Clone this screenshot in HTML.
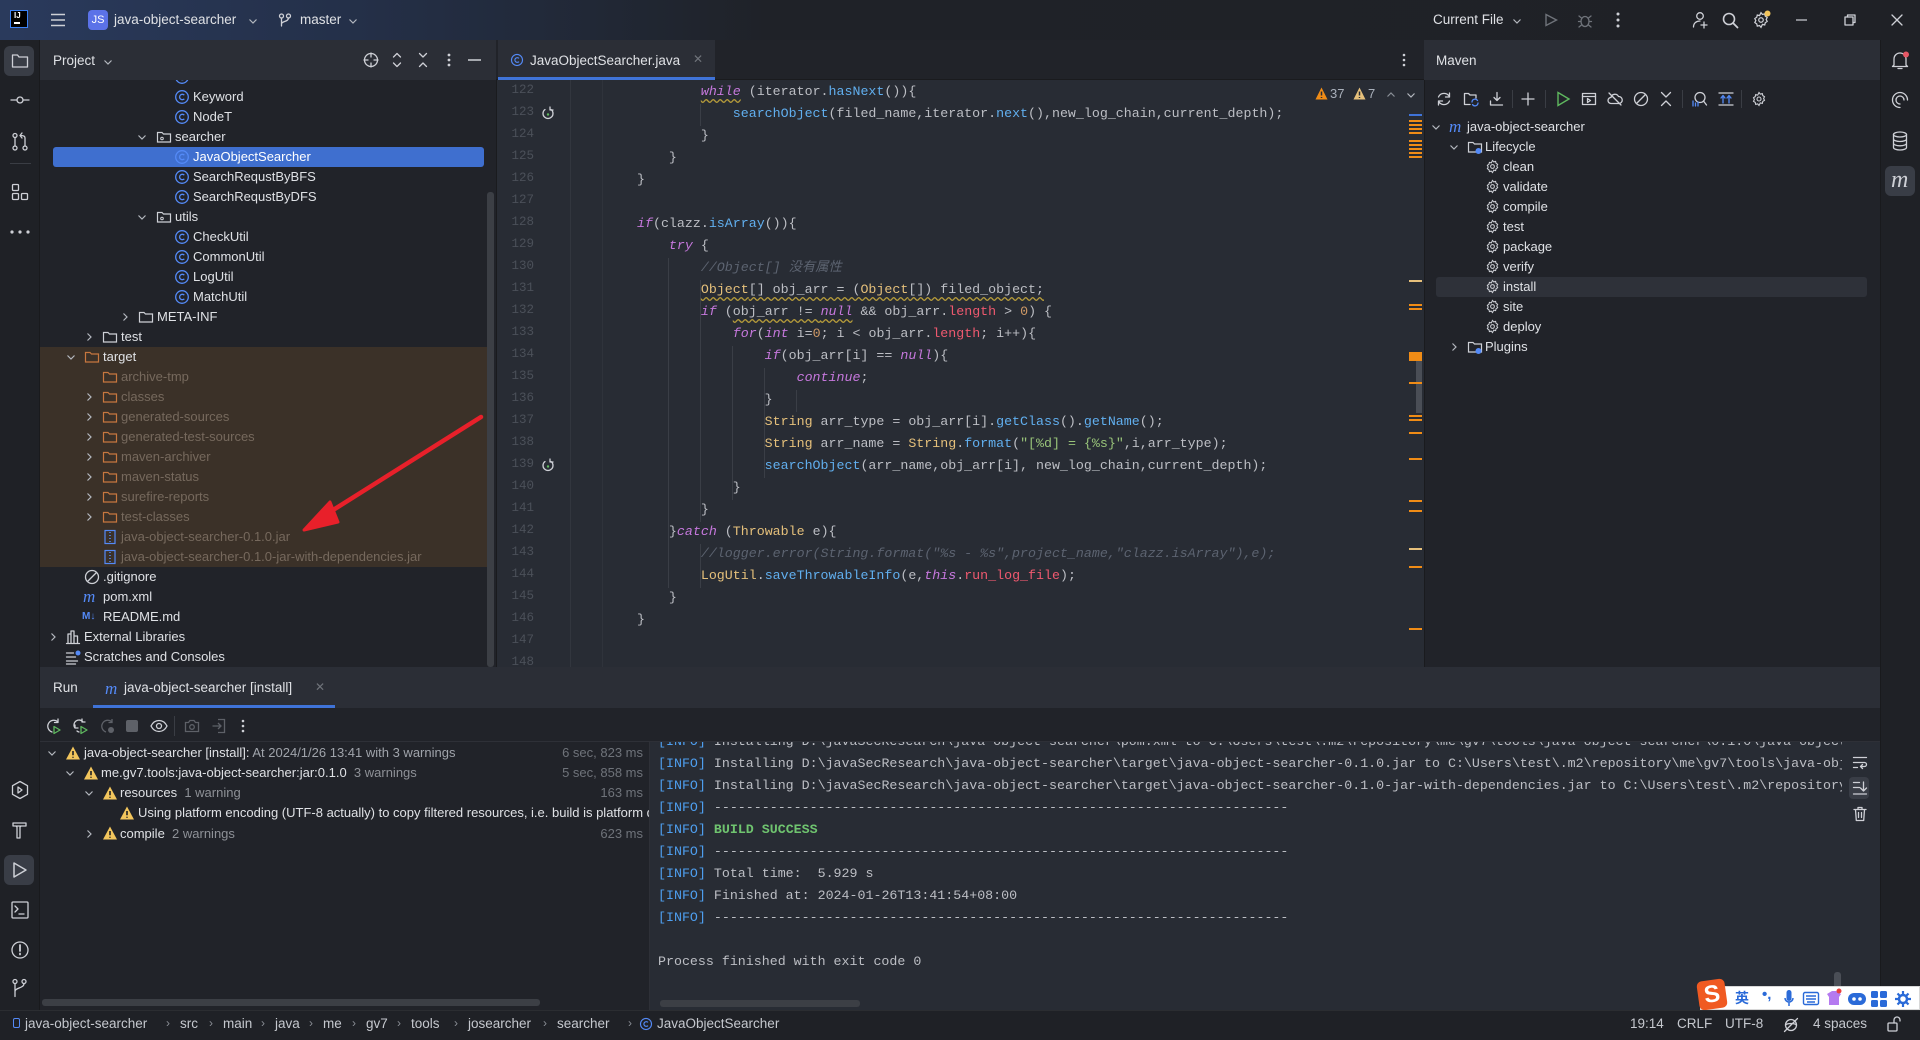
<!DOCTYPE html>
<html><head><meta charset="utf-8">
<style>
*{margin:0;padding:0;box-sizing:border-box}
body{width:1920px;height:1040px;overflow:hidden;background:#1f2126;font-family:"Liberation Sans","Noto Sans CJK SC",sans-serif;font-size:13px;color:#dfe1e5;position:relative}
.a{position:absolute}
.mono{font-family:"Liberation Mono","Noto Sans CJK SC",monospace;font-size:13.3px;white-space:pre}
svg{position:absolute;overflow:visible}
.ic{stroke:#ced0d6;fill:none;stroke-width:1.3;stroke-linecap:round;stroke-linejoin:round}
.row{position:absolute;height:20px;line-height:20px;white-space:nowrap}
.k{color:#c678dd;font-style:italic}.f{color:#61afef}.t{color:#e5c07b}.p{color:#ef596f}.n{color:#d19a66}.s{color:#98c379}.c{color:#5c6370;font-style:italic}
.w{text-decoration:underline wavy #b59b3a;text-underline-offset:3px}
.ln{position:absolute;left:500px;width:34px;text-align:right;color:#4b5059;font-family:"Liberation Mono",monospace;font-size:12.5px}
.dim{color:#76695d}
.info{color:#4e9ff0}
</style></head><body>
<svg width="0" height="0" style="position:absolute">
<symbol id="cls" viewBox="0 0 16 16"><circle cx="8" cy="8" r="6.3" fill="none" stroke="#548af7" stroke-width="1.3"/><path d="M10.3 6.2A2.7 2.7 0 1 0 10.3 9.8" fill="none" stroke="#548af7" stroke-width="1.3"/></symbol>
<symbol id="fold" viewBox="0 0 16 16"><path d="M1.5 3.5h4.5l1.5 1.5h7v8h-13z" fill="none" stroke="#ced0d6" stroke-width="1.2"/></symbol>
<symbol id="foldo" viewBox="0 0 16 16"><path d="M1.5 3.5h4.5l1.5 1.5h7v8h-13z" fill="none" stroke="#c7773f" stroke-width="1.2"/></symbol>
<symbol id="pkg" viewBox="0 0 16 16"><path d="M1.5 3.5h4.5l1.5 1.5h7v8h-13z" fill="none" stroke="#ced0d6" stroke-width="1.2"/><circle cx="6" cy="9.5" r="1.3" fill="none" stroke="#ced0d6"/></symbol>
<symbol id="jar" viewBox="0 0 16 16"><rect x="3" y="1.5" width="10" height="13" fill="none" stroke="#548af7" stroke-width="1.2"/><path d="M8 3v1M8 6v1M8 9v1M8 12v1" stroke="#548af7" stroke-width="1.5"/></symbol>
<symbol id="dn" viewBox="0 0 10 10"><path d="M1.5 3.5L5 7l3.5-3.5" fill="none" stroke="#b4b8bf" stroke-width="1.2"/></symbol>
<symbol id="rt" viewBox="0 0 10 10"><path d="M3.5 1.5L7 5l-3.5 3.5" fill="none" stroke="#b4b8bf" stroke-width="1.2"/></symbol>
<symbol id="gear" viewBox="0 0 16 16"><circle cx="8" cy="8" r="2" fill="none" stroke="#ced0d6" stroke-width="1.1"/><path d="M8 1.5l1.3 1.6 2-.5.5 2 1.7 1.1-.9 1.8.9 1.8-1.7 1.1-.5 2-2-.5L8 14.5l-1.3-1.6-2 .5-.5-2-1.7-1.1.9-1.8-.9-1.8 1.7-1.1.5-2 2 .5z" fill="none" stroke="#ced0d6" stroke-width="1.1"/></symbol>
<symbol id="warn" viewBox="0 0 16 16"><path d="M8 1.5L15 14.5H1z" fill="#f2c55c"/><path d="M8 6v4.2M8 11.8v1" stroke="#1e1f22" stroke-width="1.6"/></symbol>
<symbol id="mvn" viewBox="0 0 16 16"><text x="0" y="13" font-family="Liberation Serif" font-style="italic" font-size="17" fill="#548af7">m</text></symbol>
<symbol id="lfc" viewBox="0 0 16 16"><path d="M1.5 3.5h4.5l1.5 1.5h7v8h-13z" fill="none" stroke="#ced0d6" stroke-width="1.2"/><circle cx="11.5" cy="12" r="3" fill="#548af7"/></symbol>
</svg>

<!-- TITLE BAR -->
<div class="a" style="left:0;top:0;width:1920px;height:40px;background:linear-gradient(90deg,#2a3a5c 0%,#243049 18%,#1f2228 40%,#1f2126 100%)"></div>
<div class="a" style="left:10px;top:10px;width:18px;height:18px;background:#000;border:1.5px solid #3b82f6;color:#fff;font-size:8px;font-weight:bold;line-height:9px;padding-left:3px">IJ<div style="width:6px;height:1.5px;background:#fff;margin-top:2px"></div></div>
<svg style="left:50px;top:13px" width="16" height="14"><path d="M1 1.5h14M1 7h14M1 12.5h14" stroke="#ced0d6" stroke-width="1.5"/></svg>
<div class="a" style="left:88px;top:10px;width:20px;height:20px;background:#5b72e8;border-radius:4px;color:#fff;font-size:11px;line-height:20px;text-align:center">JS</div>
<div class="a" style="left:114px;top:12px;color:#dfe1e5;font-size:13.5px">java-object-searcher</div>
<svg style="left:248px;top:16px" width="10" height="10"><use href="#dn" width="10" height="10"/></svg>
<svg style="left:278px;top:13px" width="14" height="14" class="ic"><circle cx="3.5" cy="3" r="2"/><circle cx="10.5" cy="3" r="2"/><path d="M3.5 5v8M10.5 5c0 4-7 3-7 6"/></svg>
<div class="a" style="left:300px;top:12px;color:#dfe1e5;font-size:13.5px">master</div>
<svg style="left:348px;top:16px" width="10" height="10"><use href="#dn" width="10" height="10"/></svg>
<div class="a" style="left:1433px;top:12px;font-size:13.5px">Current File</div>
<svg style="left:1512px;top:16px" width="10" height="10"><use href="#dn" width="10" height="10"/></svg>
<svg style="left:1544px;top:13px" width="14" height="14"><path d="M2 1.5L12.5 7 2 12.5z" fill="none" stroke="#6f737a" stroke-width="1.4"/></svg>
<svg style="left:1577px;top:12px" width="16" height="16" class="ic"><ellipse cx="8" cy="9.5" rx="4" ry="5" stroke="#6f737a"/><path d="M1.5 9.5h2.5M12 9.5h2.5M2 4l2.5 2M14 4l-2.5 2M2 15l2.5-2M14 15l-2.5-2" stroke="#6f737a"/></svg>
<svg style="left:1616px;top:12px" width="4" height="16"><circle cx="2" cy="2" r="1.5" fill="#ced0d6"/><circle cx="2" cy="8" r="1.5" fill="#ced0d6"/><circle cx="2" cy="14" r="1.5" fill="#ced0d6"/></svg>
<svg style="left:1692px;top:11px" width="18" height="18" class="ic"><circle cx="8" cy="5" r="3.3"/><path d="M1.5 16c0-4 3-6 6.5-6M12 11v6M9 14h6"/></svg>
<svg style="left:1722px;top:12px" width="17" height="17" class="ic"><circle cx="7" cy="7" r="5.5" stroke-width="1.6"/><path d="M11 11l4.5 4.5" stroke-width="1.8"/></svg>
<svg style="left:1752px;top:11px" width="18" height="18"><use href="#gear" width="18" height="18"/><circle cx="15.5" cy="2.5" r="3" fill="#f2c55c"/></svg>
<svg style="left:1796px;top:19px" width="12" height="2"><path d="M0 1h11" stroke="#ced0d6" stroke-width="1.2"/></svg>
<svg style="left:1844px;top:14px" width="12" height="12" class="ic"><rect x="1" y="3" width="8" height="8"/><path d="M3.5 3V1h7.5v7.5h-2"/></svg>
<svg style="left:1891px;top:14px" width="12" height="12" class="ic"><path d="M1 1l10 10M11 1L1 11"/></svg>

<!-- LEFT STRIP -->
<div class="a" style="left:0;top:40px;width:40px;height:970px;background:#1f2126;border-right:1px solid #191a1d"></div>
<div class="a" style="left:4px;top:46px;width:30px;height:30px;background:#393d46;border-radius:6px"></div>
<svg style="left:11px;top:53px" width="18" height="16" class="ic"><path d="M1.5 2h5l1.5 2h8.5v10h-15z"/></svg>
<svg style="left:10px;top:95px" width="20" height="10" class="ic"><circle cx="10" cy="5" r="3"/><path d="M1 5h6M13 5h6"/></svg>
<svg style="left:11px;top:132px" width="18" height="20" class="ic"><circle cx="4" cy="3.5" r="2"/><circle cx="4" cy="16" r="2"/><circle cx="14" cy="16" r="2"/><path d="M4 5.5v8.5M14 14V6c0-2-2-2.5-4-2.5M11 1l-2 2.5 2 2.5"/></svg>
<div class="a" style="left:10px;top:163px;width:21px;height:1px;background:#3a3d44"></div>
<svg style="left:11px;top:183px" width="18" height="18" class="ic"><rect x="1.5" y="1.5" width="6" height="6" rx="1"/><rect x="1.5" y="10.5" width="6" height="6" rx="1"/><rect x="10.5" y="10.5" width="6" height="6" rx="1"/></svg>
<svg style="left:10px;top:230px" width="20" height="4"><circle cx="2" cy="2" r="1.6" fill="#ced0d6"/><circle cx="10" cy="2" r="1.6" fill="#ced0d6"/><circle cx="18" cy="2" r="1.6" fill="#ced0d6"/></svg>
<svg style="left:10px;top:780px" width="20" height="20" class="ic"><path d="M10 1.5l7.5 4.2v8.6L10 18.5l-7.5-4.2V5.7z"/><path d="M8 7l4 3-4 3z"/></svg>
<svg style="left:10px;top:820px" width="20" height="20" class="ic"><path d="M3 3h13v3H3zM6 6l1 1v11h3V7l1-1"/></svg>
<div class="a" style="left:4px;top:855px;width:30px;height:30px;background:#393d46;border-radius:6px"></div>
<svg style="left:12px;top:861px" width="16" height="18" class="ic"><path d="M2 2l12 7-12 7z" stroke-width="1.5"/></svg>
<svg style="left:10px;top:900px" width="20" height="20" class="ic"><rect x="2" y="2" width="16" height="16" rx="1"/><path d="M5 6l3 3-3 3M9 14h5"/></svg>
<svg style="left:10px;top:940px" width="20" height="20" class="ic"><circle cx="10" cy="10" r="8"/><path d="M10 5v6M10 13.5v1" stroke-width="1.8"/></svg>
<svg style="left:11px;top:978px" width="18" height="20" class="ic"><circle cx="4" cy="3.5" r="2"/><circle cx="13" cy="3.5" r="2"/><path d="M4 5.5v13M13 5.5c0 5-9 4-9 8"/></svg>

<!-- PROJECT PANEL -->
<div class="a" style="left:40px;top:40px;width:456px;height:627px;background:#212329"></div>
<div class="a" style="left:40px;top:40px;width:456px;height:40px;background:#2b2e36"></div>
<div class="a" style="left:53px;top:53px;font-size:13.5px">Project</div>
<svg style="left:103px;top:57px" width="10" height="10"><use href="#dn" width="10" height="10"/></svg>
<svg style="left:363px;top:52px" width="16" height="16" class="ic"><circle cx="8" cy="8" r="6.5"/><path d="M8 1v4M8 11v4M1 8h4M11 8h4"/></svg>
<svg style="left:392px;top:52px" width="10" height="16" class="ic"><path d="M1.5 5L5 1.5 8.5 5M1.5 11L5 14.5 8.5 11"/></svg>
<svg style="left:418px;top:52px" width="10" height="16" class="ic"><path d="M1.5 1.5L5 5 8.5 1.5M1.5 14.5L5 11 8.5 14.5"/></svg>
<svg style="left:447px;top:53px" width="4" height="14"><circle cx="2" cy="2" r="1.4" fill="#ced0d6"/><circle cx="2" cy="7" r="1.4" fill="#ced0d6"/><circle cx="2" cy="12" r="1.4" fill="#ced0d6"/></svg>
<svg style="left:468px;top:59px" width="14" height="2"><path d="M0 1h13" stroke="#ced0d6" stroke-width="1.5"/></svg>

<div class="a" style="left:40px;top:80px;width:447px;height:587px;overflow:hidden">
 <div class="a" style="left:0;top:267px;width:447px;height:220px;background:#3b3128"></div>
 <div class="a" style="left:13px;top:67px;width:431px;height:20px;background:#3f6fcf;border-radius:3px"></div>
</div>
<div class="a" style="left:487px;top:192px;width:7px;height:475px;background:#3c3f45;border-radius:3px"></div>

<div class="a" style="left:0;top:80px;width:487px;height:587px;overflow:hidden">
<div style="position:absolute;left:0;top:-80px;width:487px;height:700px">
<svg style="left:174px;top:69px" width="16" height="16"><use href="#cls" width="16" height="16"/></svg>
<svg style="left:174px;top:89px" width="16" height="16"><use href="#cls" width="16" height="16"/></svg><div class="row" style="left:193px;top:87px">Keyword</div>
<svg style="left:174px;top:109px" width="16" height="16"><use href="#cls" width="16" height="16"/></svg><div class="row" style="left:193px;top:107px">NodeT</div>
<svg style="left:137px;top:132px" width="10" height="10"><use href="#dn" width="10" height="10"/></svg><svg style="left:156px;top:129px" width="16" height="16"><use href="#pkg" width="16" height="16"/></svg><div class="row" style="left:175px;top:127px">searcher</div>
<svg style="left:174px;top:149px" width="16" height="16"><use href="#cls" width="16" height="16"/></svg><div class="row" style="left:193px;top:147px;color:#fff">JavaObjectSearcher</div>
<svg style="left:174px;top:169px" width="16" height="16"><use href="#cls" width="16" height="16"/></svg><div class="row" style="left:193px;top:167px">SearchRequstByBFS</div>
<svg style="left:174px;top:189px" width="16" height="16"><use href="#cls" width="16" height="16"/></svg><div class="row" style="left:193px;top:187px">SearchRequstByDFS</div>
<svg style="left:137px;top:212px" width="10" height="10"><use href="#dn" width="10" height="10"/></svg><svg style="left:156px;top:209px" width="16" height="16"><use href="#pkg" width="16" height="16"/></svg><div class="row" style="left:175px;top:207px">utils</div>
<svg style="left:174px;top:229px" width="16" height="16"><use href="#cls" width="16" height="16"/></svg><div class="row" style="left:193px;top:227px">CheckUtil</div>
<svg style="left:174px;top:249px" width="16" height="16"><use href="#cls" width="16" height="16"/></svg><div class="row" style="left:193px;top:247px">CommonUtil</div>
<svg style="left:174px;top:269px" width="16" height="16"><use href="#cls" width="16" height="16"/></svg><div class="row" style="left:193px;top:267px">LogUtil</div>
<svg style="left:174px;top:289px" width="16" height="16"><use href="#cls" width="16" height="16"/></svg><div class="row" style="left:193px;top:287px">MatchUtil</div>
<svg style="left:120px;top:312px" width="10" height="10"><use href="#rt" width="10" height="10"/></svg><svg style="left:138px;top:309px" width="16" height="16"><use href="#fold" width="16" height="16"/></svg><div class="row" style="left:157px;top:307px">META-INF</div>
<svg style="left:84px;top:332px" width="10" height="10"><use href="#rt" width="10" height="10"/></svg><svg style="left:102px;top:329px" width="16" height="16"><use href="#fold" width="16" height="16"/></svg><div class="row" style="left:121px;top:327px">test</div>
<svg style="left:66px;top:352px" width="10" height="10"><use href="#dn" width="10" height="10"/></svg><svg style="left:84px;top:349px" width="16" height="16"><use href="#foldo" width="16" height="16"/></svg><div class="row" style="left:103px;top:347px">target</div>
<svg style="left:102px;top:369px" width="16" height="16"><use href="#foldo" width="16" height="16"/></svg><div class="row dim" style="left:121px;top:367px">archive-tmp</div>
<svg style="left:84px;top:392px" width="10" height="10"><use href="#rt" width="10" height="10"/></svg><svg style="left:102px;top:389px" width="16" height="16"><use href="#foldo" width="16" height="16"/></svg><div class="row dim" style="left:121px;top:387px">classes</div>
<svg style="left:84px;top:412px" width="10" height="10"><use href="#rt" width="10" height="10"/></svg><svg style="left:102px;top:409px" width="16" height="16"><use href="#foldo" width="16" height="16"/></svg><div class="row dim" style="left:121px;top:407px">generated-sources</div>
<svg style="left:84px;top:432px" width="10" height="10"><use href="#rt" width="10" height="10"/></svg><svg style="left:102px;top:429px" width="16" height="16"><use href="#foldo" width="16" height="16"/></svg><div class="row dim" style="left:121px;top:427px">generated-test-sources</div>
<svg style="left:84px;top:452px" width="10" height="10"><use href="#rt" width="10" height="10"/></svg><svg style="left:102px;top:449px" width="16" height="16"><use href="#foldo" width="16" height="16"/></svg><div class="row dim" style="left:121px;top:447px">maven-archiver</div>
<svg style="left:84px;top:472px" width="10" height="10"><use href="#rt" width="10" height="10"/></svg><svg style="left:102px;top:469px" width="16" height="16"><use href="#foldo" width="16" height="16"/></svg><div class="row dim" style="left:121px;top:467px">maven-status</div>
<svg style="left:84px;top:492px" width="10" height="10"><use href="#rt" width="10" height="10"/></svg><svg style="left:102px;top:489px" width="16" height="16"><use href="#foldo" width="16" height="16"/></svg><div class="row dim" style="left:121px;top:487px">surefire-reports</div>
<svg style="left:84px;top:512px" width="10" height="10"><use href="#rt" width="10" height="10"/></svg><svg style="left:102px;top:509px" width="16" height="16"><use href="#foldo" width="16" height="16"/></svg><div class="row dim" style="left:121px;top:507px">test-classes</div>
<svg style="left:102px;top:529px" width="16" height="16"><use href="#jar" width="16" height="16"/></svg><div class="row dim" style="left:121px;top:527px">java-object-searcher-0.1.0.jar</div>
<svg style="left:102px;top:549px" width="16" height="16"><use href="#jar" width="16" height="16"/></svg><div class="row dim" style="left:121px;top:547px">java-object-searcher-0.1.0-jar-with-dependencies.jar</div>
<svg style="left:84px;top:569px" width="16" height="16" class="ic"><circle cx="8" cy="8" r="6.5"/><path d="M3.5 12.5l9-9"/></svg><div class="row" style="left:103px;top:567px">.gitignore</div>
<svg style="left:82px;top:589px" width="18" height="16"><use href="#mvn" width="18" height="16"/></svg><div class="row" style="left:103px;top:587px">pom.xml</div>
<div class="row" style="left:82px;top:607px;color:#548af7;font-weight:bold;font-size:10px">M↓</div><div class="row" style="left:103px;top:607px">README.md</div>
<svg style="left:48px;top:632px" width="10" height="10"><use href="#rt" width="10" height="10"/></svg><svg style="left:65px;top:629px" width="16" height="16" class="ic"><path d="M1.5 14.5h13M3 14.5V5h3v9.5M6 14.5V2h3v12.5M9 14.5V7h3.5v7.5"/></svg><div class="row" style="left:84px;top:627px">External Libraries</div>
<svg style="left:65px;top:649px" width="16" height="16" class="ic"><path d="M1.5 4h7M1.5 8h9M1.5 12h11M1.5 15h9"/><circle cx="13" cy="4" r="2.5" fill="#548af7" stroke="none"/></svg><div class="row" style="left:84px;top:647px">Scratches and Consoles</div>
</div></div>
<!-- red arrow -->
<svg style="left:0;top:0" width="1920" height="1040"><path d="M481 417L322 517" stroke="#e8202a" stroke-width="4.5" stroke-linecap="round"/><path d="M304 530L330 502 338 522z" fill="#e8202a" stroke="#e8202a" stroke-width="3" stroke-linejoin="round"/></svg>

<!-- EDITOR -->
<div class="a" style="left:496px;top:40px;width:928px;height:627px;background:#282c34;border-left:1px solid #1a1b1e"></div>
<div class="a" style="left:496px;top:40px;width:928px;height:40px;background:#212329;border-bottom:1px solid #1a1b1e"></div>
<div class="a" style="left:498px;top:40px;width:217px;height:40px;background:#2b2e36;border-bottom:3px solid #3f73d8"></div>
<svg style="left:510px;top:53px" width="14" height="14"><use href="#cls" width="14" height="14"/></svg>
<div class="a" style="left:530px;top:53px;font-size:13.5px">JavaObjectSearcher.java</div>
<div class="a" style="left:693px;top:52px;color:#6f737a;font-size:12px">✕</div>
<svg style="left:1402px;top:53px" width="4" height="14"><circle cx="2" cy="2" r="1.3" fill="#ced0d6"/><circle cx="2" cy="7" r="1.3" fill="#ced0d6"/><circle cx="2" cy="12" r="1.3" fill="#ced0d6"/></svg>
<div class="a" style="left:570px;top:80px;width:1px;height:587px;background:#32363e"></div>
<div class="a" style="left:602px;top:80px;width:1px;height:587px;background:#2f333b"></div>
<div class="a" style="left:668px;top:258px;width:1px;height:330px;background:#3a3e46"></div>
<div class="a" style="left:700px;top:280px;width:1px;height:242px;background:#3a3e46"></div>
<div class="a" style="left:700px;top:544px;width:1px;height:44px;background:#3a3e46"></div>
<div class="a" style="left:732px;top:346px;width:1px;height:154px;background:#3a3e46"></div>
<div class="a" style="left:764px;top:368px;width:1px;height:110px;background:#3a3e46"></div>
<div class="a" style="left:796px;top:390px;width:1px;height:22px;background:#3a3e46"></div>
<div class="a" style="left:700px;top:104px;width:1px;height:22px;background:#3a3e46"></div>

<div class="a" style="left:496px;top:80px;width:910px;height:587px;overflow:hidden">
<div style="position:absolute;left:-496px;top:-80px;width:1420px;height:700px">
<div class="ln" style="top:83px">122</div><div class="ln" style="top:105px">123</div><div class="ln" style="top:127px">124</div><div class="ln" style="top:149px">125</div><div class="ln" style="top:171px">126</div><div class="ln" style="top:193px">127</div><div class="ln" style="top:215px">128</div><div class="ln" style="top:237px">129</div><div class="ln" style="top:259px">130</div><div class="ln" style="top:281px">131</div><div class="ln" style="top:303px">132</div><div class="ln" style="top:325px">133</div><div class="ln" style="top:347px">134</div><div class="ln" style="top:369px">135</div><div class="ln" style="top:391px">136</div><div class="ln" style="top:413px">137</div><div class="ln" style="top:435px">138</div><div class="ln" style="top:457px">139</div><div class="ln" style="top:479px">140</div><div class="ln" style="top:501px">141</div><div class="ln" style="top:523px">142</div><div class="ln" style="top:545px">143</div><div class="ln" style="top:567px">144</div><div class="ln" style="top:589px">145</div><div class="ln" style="top:611px">146</div><div class="ln" style="top:633px">147</div><div class="ln" style="top:655px">148</div>
<svg style="left:541px;top:106px" width="14" height="14" class="ic"><path d="M4 3.5A5 5 0 1 0 10 3.5M9 1v3h3"/><circle cx="7" cy="8.5" r="1.2" fill="#5fb85f" stroke="none"/></svg>
<svg style="left:541px;top:458px" width="14" height="14" class="ic"><path d="M4 3.5A5 5 0 1 0 10 3.5M9 1v3h3"/><circle cx="7" cy="8.5" r="1.2" fill="#5fb85f" stroke="none"/></svg>
<div class="a mono" style="left:637px;top:81px;line-height:22px;color:#bcbec4">        <span class="k w">while</span> (iterator.<span class="f">hasNext</span>()){
            <span class="f">searchObject</span>(filed_name,iterator.<span class="f">next</span>(),new_log_chain,current_depth);
        }
    }
}

<span class="k">if</span>(clazz.<span class="f">isArray</span>()){
    <span class="k">try</span> {
        <span class="c">//Object[] 没有属性</span>
        <span class="w"><span class="t">Object</span>[] obj_arr = (<span class="t">Object</span>[]) filed_object;</span>
        <span class="k">if</span> (<span class="w">obj_arr != <span class="k">null</span></span> &amp;&amp; obj_arr.<span class="p">length</span> &gt; <span class="n">0</span>) {
            <span class="k">for</span>(<span class="k">int</span> i=<span class="n">0</span>; i &lt; obj_arr.<span class="p">length</span>; i++){
                <span class="k">if</span>(obj_arr[i] == <span class="k">null</span>){
                    <span class="k">continue</span>;
                }
                <span class="t">String</span> arr_type = obj_arr[i].<span class="f">getClass</span>().<span class="f">getName</span>();
                <span class="t">String</span> arr_name = <span class="t">String</span>.<span class="f">format</span>(<span class="s">"[%d] = {%s}"</span>,i,arr_type);
                <span class="f">searchObject</span>(arr_name,obj_arr[i], new_log_chain,current_depth);
            }
        }
    }<span class="k">catch</span> (<span class="t">Throwable</span> e){
        <span class="c">//logger.error(String.format("%s - %s",project_name,"clazz.isArray"),e);</span>
        <span class="t">LogUtil</span>.<span class="f">saveThrowableInfo</span>(e,<span class="k">this</span>.<span class="p">run_log_file</span>);
    }
}</div>
</div></div>
<!-- inspection widget -->
<svg style="left:1315px;top:87px" width="13" height="13"><path d="M6.5 0.5L12.5 12.5H0.5z" fill="#f08c16"/><path d="M6.5 4.5v4M6.5 10v1" stroke="#282c34" stroke-width="1.5"/></svg>
<div class="a" style="left:1330px;top:86px;color:#a9b0bb;font-size:13px">37</div>
<svg style="left:1353px;top:87px" width="13" height="13"><path d="M6.5 0.5L12.5 12.5H0.5z" fill="#e6c07b"/><path d="M6.5 4.5v4M6.5 10v1" stroke="#282c34" stroke-width="1.5"/></svg>
<div class="a" style="left:1368px;top:86px;color:#a9b0bb;font-size:13px">7</div>
<svg style="left:1386px;top:90px" width="10" height="10"><path d="M1.5 6.5L5 3l3.5 3.5" fill="none" stroke="#8a8f97" stroke-width="1.2"/></svg>
<svg style="left:1406px;top:90px" width="10" height="10"><use href="#dn" width="10" height="10"/></svg>
<!-- error stripe -->
<div class="a" style="left:1409px;top:114px;width:13px;height:2px;background:#3f73d8"></div>
<div class="a" style="left:1409px;top:120px;width:13px;height:14px;background:repeating-linear-gradient(#f08c16 0 2px,transparent 2px 4px)"></div>
<div class="a" style="left:1409px;top:140px;width:13px;height:18px;background:repeating-linear-gradient(#f08c16 0 2px,transparent 2px 4px)"></div>
<div class="a" style="left:1409px;top:280px;width:13px;height:2px;background:#e6c07b"></div>
<div class="a" style="left:1409px;top:304px;width:13px;height:6px;background:repeating-linear-gradient(#f08c16 0 2px,transparent 2px 4px)"></div>
<div class="a" style="left:1409px;top:352px;width:13px;height:9px;background:#f08c16"></div>
<div class="a" style="left:1416px;top:361px;width:6px;height:52px;background:#4a4e56"></div>
<div class="a" style="left:1409px;top:382px;width:13px;height:2px;background:#f08c16"></div>
<div class="a" style="left:1409px;top:415px;width:13px;height:6px;background:repeating-linear-gradient(#f08c16 0 2px,transparent 2px 4px)"></div>
<div class="a" style="left:1409px;top:432px;width:13px;height:2px;background:#f08c16"></div>
<div class="a" style="left:1409px;top:458px;width:13px;height:2px;background:#f08c16"></div>
<div class="a" style="left:1409px;top:500px;width:13px;height:2px;background:#f08c16"></div>
<div class="a" style="left:1409px;top:510px;width:13px;height:2px;background:#f08c16"></div>
<div class="a" style="left:1409px;top:548px;width:13px;height:2px;background:#e6c07b"></div>
<div class="a" style="left:1409px;top:566px;width:13px;height:2px;background:#f08c16"></div>
<div class="a" style="left:1409px;top:628px;width:13px;height:2px;background:#f08c16"></div>

<!-- MAVEN -->
<div class="a" style="left:1424px;top:40px;width:456px;height:627px;background:#212329;border-left:1px solid #1a1b1e"></div>
<div class="a" style="left:1424px;top:40px;width:456px;height:40px;background:#2b2e36"></div>
<div class="a" style="left:1436px;top:53px;font-size:13.5px">Maven</div>
<svg style="left:1436px;top:91px" width="16" height="16" class="ic"><path d="M13.5 6A6 6 0 0 0 2.5 6M2.5 10a6 6 0 0 0 11 0M13.5 2v4h-4M2.5 14v-4h4"/></svg>
<svg style="left:1463px;top:91px" width="16" height="16" class="ic"><path d="M1.5 2.5h4l1.5 1.5h6v3M7 13.5H1.5v-11"/><path d="M9 11a3 3 0 0 1 5.5-1.5M15 12a3 3 0 0 1-5.5 1.5" stroke="#548af7"/></svg>
<svg style="left:1489px;top:91px" width="16" height="16" class="ic"><path d="M8 1.5v8M5 6.5l3 3 3-3M1.5 10v4h12"/></svg>
<div class="a" style="left:1512px;top:90px;width:1px;height:18px;background:#3a3d44"></div>
<svg style="left:1521px;top:92px" width="14" height="14" class="ic"><path d="M7 1v12M1 7h12"/></svg>
<div class="a" style="left:1545px;top:90px;width:1px;height:18px;background:#3a3d44"></div>
<svg style="left:1555px;top:91px" width="16" height="16"><path d="M3 1.5L14 8 3 14.5z" fill="none" stroke="#5fb85f" stroke-width="1.4"/></svg>
<svg style="left:1581px;top:91px" width="16" height="16" class="ic"><rect x="1.5" y="2.5" width="13" height="11"/><path d="M1.5 5.5h13M6.5 7.5l3 2-3 2z"/></svg>
<svg style="left:1607px;top:91px" width="16" height="16" class="ic"><path d="M4 12.5a3 3 0 0 1 0-6 4 4 0 0 1 7.5-1 3 3 0 0 1 .5 7H4M2 2l12 12"/></svg>
<svg style="left:1633px;top:91px" width="16" height="16" class="ic"><circle cx="8" cy="8" r="6.5"/><path d="M3.5 12.5l9-9"/></svg>
<svg style="left:1660px;top:91px" width="12" height="16" class="ic"><path d="M1.5 1.5L6 6l4.5-4.5M1.5 14.5L6 10l4.5 4.5"/></svg>
<div class="a" style="left:1682px;top:90px;width:1px;height:18px;background:#3a3d44"></div>
<svg style="left:1691px;top:91px" width="16" height="16" class="ic"><circle cx="9" cy="6.5" r="5"/><path d="M12.5 10l3 4"/><path d="M2 10v5M4.5 12v3M7 11v4" stroke="#548af7"/></svg>
<svg style="left:1718px;top:91px" width="16" height="16" class="ic"><path d="M5 12V5M3 7l2-2.5L7 7M11 12V5M9 7l2-2.5L13 7" stroke="#548af7"/><path d="M1 2h14M1 14h14"/></svg>
<div class="a" style="left:1741px;top:90px;width:1px;height:18px;background:#3a3d44"></div>
<svg style="left:1751px;top:91px" width="16" height="16"><use href="#gear" width="16" height="16"/></svg>
<div class="a" style="left:1436px;top:277px;width:431px;height:20px;background:#2e3139;border-radius:3px"></div>
<svg style="left:1431px;top:122px" width="10" height="10"><use href="#dn" width="10" height="10"/></svg>
<svg style="left:1448px;top:119px" width="18" height="16"><use href="#mvn" width="18" height="16"/></svg>
<div class="row" style="left:1467px;top:117px">java-object-searcher</div>
<svg style="left:1449px;top:142px" width="10" height="10"><use href="#dn" width="10" height="10"/></svg>
<svg style="left:1467px;top:139px" width="16" height="16"><use href="#lfc" width="16" height="16"/></svg>
<div class="row" style="left:1485px;top:137px">Lifecycle</div>
<svg style="left:1485px;top:159px" width="15" height="15"><use href="#gear" width="15" height="15"/></svg><div class="row" style="left:1503px;top:157px">clean</div>
<svg style="left:1485px;top:179px" width="15" height="15"><use href="#gear" width="15" height="15"/></svg><div class="row" style="left:1503px;top:177px">validate</div>
<svg style="left:1485px;top:199px" width="15" height="15"><use href="#gear" width="15" height="15"/></svg><div class="row" style="left:1503px;top:197px">compile</div>
<svg style="left:1485px;top:219px" width="15" height="15"><use href="#gear" width="15" height="15"/></svg><div class="row" style="left:1503px;top:217px">test</div>
<svg style="left:1485px;top:239px" width="15" height="15"><use href="#gear" width="15" height="15"/></svg><div class="row" style="left:1503px;top:237px">package</div>
<svg style="left:1485px;top:259px" width="15" height="15"><use href="#gear" width="15" height="15"/></svg><div class="row" style="left:1503px;top:257px">verify</div>
<svg style="left:1485px;top:279px" width="15" height="15"><use href="#gear" width="15" height="15"/></svg><div class="row" style="left:1503px;top:277px">install</div>
<svg style="left:1485px;top:299px" width="15" height="15"><use href="#gear" width="15" height="15"/></svg><div class="row" style="left:1503px;top:297px">site</div>
<svg style="left:1485px;top:319px" width="15" height="15"><use href="#gear" width="15" height="15"/></svg><div class="row" style="left:1503px;top:317px">deploy</div>
<svg style="left:1449px;top:342px" width="10" height="10"><use href="#rt" width="10" height="10"/></svg>
<svg style="left:1467px;top:339px" width="16" height="16"><use href="#lfc" width="16" height="16"/></svg>
<div class="row" style="left:1485px;top:337px">Plugins</div>

<!-- RIGHT STRIP -->
<div class="a" style="left:1880px;top:40px;width:40px;height:970px;background:#1f2126;border-left:1px solid #191a1d"></div>
<svg style="left:1891px;top:51px" width="18" height="20" class="ic"><path d="M3 14V8a6 6 0 0 1 12 0v6l1.5 1.5h-15zM7 17.5h4"/><circle cx="15" cy="3.5" r="3" fill="#e55765" stroke="none"/></svg>
<svg style="left:1891px;top:91px" width="18" height="18" class="ic"><path d="M9 16.5A7.5 7.5 0 1 1 16.5 9M9 13a4 4 0 1 1 4-4"/></svg>
<svg style="left:1892px;top:131px" width="16" height="20" class="ic"><ellipse cx="8" cy="3.5" rx="6.5" ry="2.5"/><path d="M1.5 3.5v13c0 1.4 2.9 2.5 6.5 2.5s6.5-1.1 6.5-2.5v-13M1.5 8c0 1.4 2.9 2.5 6.5 2.5s6.5-1.1 6.5-2.5M1.5 12.3c0 1.4 2.9 2.5 6.5 2.5s6.5-1.1 6.5-2.5"/></svg>
<div class="a" style="left:1885px;top:166px;width:30px;height:30px;background:#393d46;border-radius:6px"></div>
<div class="a" style="left:1891px;top:166px;font-family:'Liberation Serif';font-style:italic;font-size:24px;line-height:28px;color:#ced0d6">m</div>

<!-- BOTTOM PANEL -->
<div class="a" style="left:40px;top:667px;width:1840px;height:343px;background:#212329;border-top:1px solid #1a1b1e"></div>
<div class="a" style="left:40px;top:667px;width:1840px;height:41px;background:#2b2e36"></div>
<div class="a" style="left:53px;top:680px;font-size:13.5px">Run</div>
<div class="a" style="left:93px;top:705px;width:242px;height:3px;background:#3f73d8"></div>
<svg style="left:104px;top:681px" width="18" height="16"><use href="#mvn" width="18" height="16"/></svg>
<div class="a" style="left:124px;top:680px;font-size:13.5px">java-object-searcher [install]</div>
<div class="a" style="left:315px;top:680px;color:#6f737a;font-size:12px">✕</div>
<svg style="left:46px;top:718px" width="16" height="16" class="ic"><path d="M12 4A6 6 0 1 0 6 14M12 1v3.5H8.5"/><path d="M8 8.5l6 3.5-6 3.5z" stroke="#5fb85f"/></svg>
<svg style="left:73px;top:718px" width="16" height="16" class="ic"><path d="M10 4A5 5 0 0 0 2 10M4 13A5 5 0 0 0 6 14M9 1v3h3M2 7v3h3"/><path d="M8 8.5l6 3.5-6 3.5z" stroke="#5fb85f"/></svg>
<svg style="left:100px;top:718px" width="16" height="16"><path d="M12 4A6 6 0 1 0 6 14M12 1v3.5H8.5" fill="none" stroke="#5e6168" stroke-width="1.3"/><circle cx="11" cy="12" r="3" fill="#5e6168"/></svg>
<div class="a" style="left:126px;top:720px;width:12px;height:12px;background:#5e6168;border-radius:2px"></div>
<svg style="left:150px;top:718px" width="18" height="16" class="ic"><path d="M1 8c2-4 5-5.5 8-5.5S15 4 17 8c-2 4-5 5.5-8 5.5S3 12 1 8z"/><circle cx="9" cy="8" r="2.5"/></svg>
<div class="a" style="left:174px;top:716px;width:1px;height:20px;background:#3a3d44"></div>
<svg style="left:184px;top:718px" width="16" height="16"><path d="M1.5 4.5h3l1.5-2h4l1.5 2h3v9h-13z" fill="none" stroke="#5e6168" stroke-width="1.3"/><circle cx="8" cy="9" r="2.3" fill="none" stroke="#5e6168" stroke-width="1.3"/></svg>
<svg style="left:211px;top:718px" width="16" height="16"><path d="M7 1.5h6.5v13H7M1.5 8h8M7 5l3 3-3 3" fill="none" stroke="#5e6168" stroke-width="1.3"/></svg>
<svg style="left:241px;top:719px" width="4" height="14"><circle cx="2" cy="2" r="1.3" fill="#ced0d6"/><circle cx="2" cy="7" r="1.3" fill="#ced0d6"/><circle cx="2" cy="12" r="1.3" fill="#ced0d6"/></svg>
<div class="a" style="left:40px;top:741px;width:1840px;height:1px;background:#2e3037"></div>
<!-- run tree -->
<div class="a" style="left:40px;top:742px;width:609px;height:262px;overflow:hidden">
<div style="position:absolute;left:-40px;top:-742px;width:700px;height:1040px">
<svg style="left:47px;top:748px" width="10" height="10"><use href="#dn" width="10" height="10"/></svg>
<svg style="left:65px;top:745px" width="16" height="16"><use href="#warn" width="16" height="16"/></svg>
<div class="row" style="left:84px;top:743px"><span style="color:#dfe1e5">java-object-searcher [install]:</span> <span style="color:#a0a4ab">At 2024/1/26 13:41 with 3 warnings</span></div>
<div class="row" style="left:560px;top:743px;width:83px;text-align:right;color:#6f737a">6 sec, 823 ms</div>
<svg style="left:65px;top:768px" width="10" height="10"><use href="#dn" width="10" height="10"/></svg>
<svg style="left:83px;top:765px" width="16" height="16"><use href="#warn" width="16" height="16"/></svg>
<div class="row" style="left:101px;top:763px">me.gv7.tools:java-object-searcher:jar:0.1.0 <span style="color:#8e9197">&nbsp;3 warnings</span></div>
<div class="row" style="left:560px;top:763px;width:83px;text-align:right;color:#6f737a">5 sec, 858 ms</div>
<svg style="left:84px;top:788px" width="10" height="10"><use href="#dn" width="10" height="10"/></svg>
<svg style="left:102px;top:785px" width="16" height="16"><use href="#warn" width="16" height="16"/></svg>
<div class="row" style="left:120px;top:783px">resources <span style="color:#8e9197">&nbsp;1 warning</span></div>
<div class="row" style="left:560px;top:783px;width:83px;text-align:right;color:#6f737a">163 ms</div>
<svg style="left:119px;top:805px" width="16" height="16"><use href="#warn" width="16" height="16"/></svg>
<div class="row" style="left:138px;top:803px">Using platform encoding (UTF-8 actually) to copy filtered resources, i.e. build is platform dependent!</div>
<svg style="left:84px;top:829px" width="10" height="10"><use href="#rt" width="10" height="10"/></svg>
<svg style="left:102px;top:825px" width="16" height="16"><use href="#warn" width="16" height="16"/></svg>
<div class="row" style="left:120px;top:824px">compile <span style="color:#8e9197">&nbsp;2 warnings</span></div>
<div class="row" style="left:560px;top:824px;width:83px;text-align:right;color:#6f737a">623 ms</div>
</div></div>
<div class="a" style="left:42px;top:999px;width:498px;height:7px;background:#3c3f45;border-radius:3px"></div>
<div class="a" style="left:649px;top:742px;width:1px;height:268px;background:#2e3037"></div>
<!-- console -->
<div class="a" style="left:650px;top:742px;width:1230px;height:268px;background:#282c34"></div>
<div class="a" style="left:658px;top:742px;width:1184px;height:258px;overflow:hidden">
<div class="a mono" style="left:0;top:-11px;line-height:22px;color:#bcbec4"><span class="info">[INFO]</span> Installing D:\javaSecResearch\java-object-searcher\pom.xml to C:\Users\test\.m2\repository\me\gv7\tools\java-object-searcher\0.1.0\java-object-searcher-0.1.0.pom
<span class="info">[INFO]</span> Installing D:\javaSecResearch\java-object-searcher\target\java-object-searcher-0.1.0.jar to C:\Users\test\.m2\repository\me\gv7\tools\java-object-searcher
<span class="info">[INFO]</span> Installing D:\javaSecResearch\java-object-searcher\target\java-object-searcher-0.1.0-jar-with-dependencies.jar to C:\Users\test\.m2\repository\me
<span class="info">[INFO]</span> ------------------------------------------------------------------------
<span class="info">[INFO]</span> <b style="color:#6fc46f">BUILD SUCCESS</b>
<span class="info">[INFO]</span> ------------------------------------------------------------------------
<span class="info">[INFO]</span> Total time:  5.929 s
<span class="info">[INFO]</span> Finished at: 2024-01-26T13:41:54+08:00
<span class="info">[INFO]</span> ------------------------------------------------------------------------

Process finished with exit code 0</div>
</div>
<div class="a" style="left:660px;top:1000px;width:200px;height:7px;background:#3c3f45;border-radius:3px"></div>
<div class="a" style="left:1834px;top:972px;width:7px;height:28px;background:#4a4e56;border-radius:3px"></div>
<div class="a" style="left:1846px;top:742px;width:34px;height:268px;background:#282c34"></div>
<svg style="left:1852px;top:755px" width="16" height="16" class="ic"><path d="M1.5 2.5h13M1.5 7.5h11a2 2 0 0 1 0 4H9M10.5 9.5l-2 2 2 2M1.5 12.5h4"/></svg>
<div class="a" style="left:1849px;top:777px;width:20px;height:22px;background:#393d46;border-radius:4px"></div>
<svg style="left:1852px;top:780px" width="16" height="16" class="ic"><path d="M1.5 2.5h6M1.5 7.5h6M1.5 14h13M11.5 2v9M8.5 8l3 3 3-3"/></svg>
<svg style="left:1853px;top:806px" width="14" height="16" class="ic"><path d="M1 3.5h12M5 3.5V1.5h4v2M2.5 3.5l.8 11h7.4l.8-11M5.5 6.5v5M8.5 6.5v5"/></svg>

<!-- IME toolbar -->
<div class="a" style="left:1700px;top:986px;width:220px;height:24px;background:#fff;border:1px solid #d8d8d8"></div>
<div class="a" style="left:1698px;top:980px;width:28px;height:29px;background:#f05a22;border-radius:5px;transform:rotate(-8deg);color:#fff;font-weight:bold;font-size:24px;line-height:29px;text-align:center;font-family:'Liberation Sans'">S</div>
<div class="a" style="left:1735px;top:988px;color:#2a6ad8;font-size:14px;font-weight:bold;font-family:'Noto Sans CJK SC',sans-serif">英</div>
<div class="a" style="left:1762px;top:986px;color:#2a6ad8;font-size:15px;font-weight:bold">•,</div>
<svg style="left:1784px;top:990px" width="10" height="17"><rect x="2.5" y="0" width="5" height="11" rx="2.5" fill="#2a6ad8"/><path d="M1 8a4 4 0 0 0 8 0M5 12v4" stroke="#2a6ad8" stroke-width="1.5" fill="none"/></svg>
<svg style="left:1803px;top:992px" width="16" height="13"><rect x="0.5" y="0.5" width="15" height="12" rx="1.5" fill="none" stroke="#2a6ad8" stroke-width="1.4"/><path d="M3 4h10M3 7h10M4 10h8" stroke="#2a6ad8" stroke-width="1.4"/></svg>
<svg style="left:1826px;top:988px" width="16" height="18"><path d="M1 6l5-3h4l5 3-2 3v8H3V9z" fill="#b57af0"/><circle cx="13" cy="3" r="2.5" fill="#e84040"/></svg>
<svg style="left:1848px;top:992px" width="18" height="14"><rect x="0" y="1" width="18" height="12" rx="6" fill="#2a6ad8"/><circle cx="6" cy="7" r="1.8" fill="#fff"/><circle cx="12" cy="7" r="1.8" fill="#fff"/></svg>
<svg style="left:1871px;top:991px" width="16" height="16"><rect x="0" y="0" width="7" height="7" rx="1.5" fill="#2a6ad8"/><rect x="9" y="0" width="7" height="7" rx="1.5" fill="#2a6ad8"/><rect x="0" y="9" width="7" height="7" rx="1.5" fill="#2a6ad8"/><rect x="9" y="9" width="7" height="7" rx="1.5" fill="#2a6ad8"/></svg>
<svg style="left:1894px;top:990px" width="18" height="18"><circle cx="9" cy="9" r="4" fill="none" stroke="#2a6ad8" stroke-width="2.5"/><path d="M9 1v4M9 13v4M1 9h4M13 9h4M3.5 3.5l2.5 2.5M12 12l2.5 2.5M3.5 14.5L6 12M12 6l2.5-2.5" stroke="#2a6ad8" stroke-width="2.2"/></svg>

<!-- STATUS BAR -->
<div class="a" style="left:0;top:1010px;width:1920px;height:30px;background:#1f2126;border-top:1px solid #2b2d31"></div>
<div class="a" style="left:13px;top:1018px;width:7px;height:10px;border:1.3px solid #548af7;border-radius:2px"></div>
<div class="a" style="left:25px;top:1016px;color:#c5c8ce;font-size:13.5px;white-space:pre">java-object-searcher</div>
<div class="a" style="top:1016px;left:166px;color:#8a8e95;font-size:12px">›</div>
<div class="a" style="left:180px;top:1016px;color:#c5c8ce;font-size:13.5px">src</div>
<div class="a" style="top:1016px;left:209px;color:#8a8e95;font-size:12px">›</div>
<div class="a" style="left:223px;top:1016px;color:#c5c8ce;font-size:13.5px">main</div>
<div class="a" style="top:1016px;left:261px;color:#8a8e95;font-size:12px">›</div>
<div class="a" style="left:275px;top:1016px;color:#c5c8ce;font-size:13.5px">java</div>
<div class="a" style="top:1016px;left:309px;color:#8a8e95;font-size:12px">›</div>
<div class="a" style="left:323px;top:1016px;color:#c5c8ce;font-size:13.5px">me</div>
<div class="a" style="top:1016px;left:352px;color:#8a8e95;font-size:12px">›</div>
<div class="a" style="left:366px;top:1016px;color:#c5c8ce;font-size:13.5px">gv7</div>
<div class="a" style="top:1016px;left:397px;color:#8a8e95;font-size:12px">›</div>
<div class="a" style="left:411px;top:1016px;color:#c5c8ce;font-size:13.5px">tools</div>
<div class="a" style="top:1016px;left:454px;color:#8a8e95;font-size:12px">›</div>
<div class="a" style="left:468px;top:1016px;color:#c5c8ce;font-size:13.5px">josearcher</div>
<div class="a" style="top:1016px;left:543px;color:#8a8e95;font-size:12px">›</div>
<div class="a" style="left:557px;top:1016px;color:#c5c8ce;font-size:13.5px">searcher</div>
<div class="a" style="top:1016px;left:628px;color:#8a8e95;font-size:12px">›</div>
<svg style="left:639px;top:1017px" width="14" height="14"><use href="#cls" width="14" height="14"/></svg>
<div class="a" style="left:657px;top:1016px;color:#c5c8ce;font-size:13.5px">JavaObjectSearcher</div>
<div class="a" style="left:1630px;top:1016px;color:#c5c8ce;font-size:13.5px">19:14</div>
<div class="a" style="left:1677px;top:1016px;color:#c5c8ce;font-size:13.5px">CRLF</div>
<div class="a" style="left:1725px;top:1016px;color:#c5c8ce;font-size:13.5px">UTF-8</div>
<svg style="left:1783px;top:1017px" width="16" height="16" class="ic"><circle cx="8" cy="8" r="5.5"/><path d="M2.5 8c2-2 9-2 11 0M1.5 14.5l13-13"/></svg>
<div class="a" style="left:1813px;top:1016px;color:#c5c8ce;font-size:13.5px">4 spaces</div>
<svg style="left:1887px;top:1016px" width="14" height="16" class="ic"><rect x="1" y="7" width="9" height="8" rx="1"/><path d="M7 7V4a3 3 0 0 1 6 0v1"/></svg>
</body></html>
